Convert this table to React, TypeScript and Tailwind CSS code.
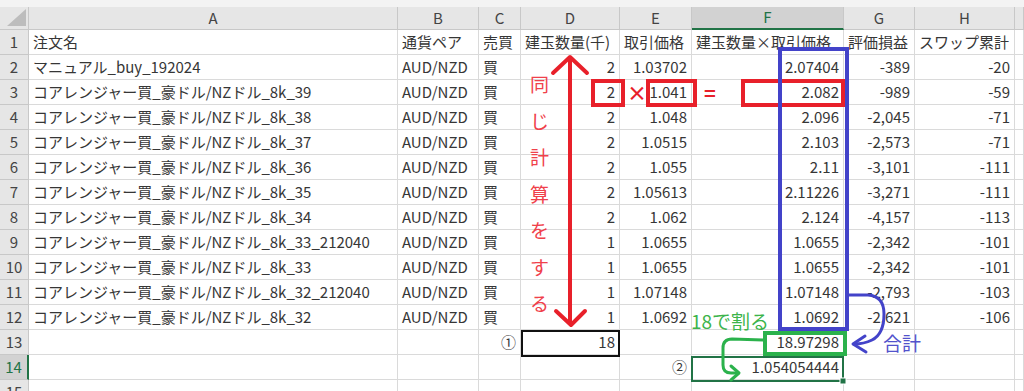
import React from "react";

const colW = [
  "w-[29px]",
  "w-[369px]",
  "w-[81px]",
  "w-[42px]",
  "w-[99px]",
  "w-[72px]",
  "w-[152px]",
  "w-[71px]",
  "w-[100px]",
  "w-[9px]",
];
const letters = ["", "A", "B", "C", "D", "E", "F", "G", "H", ""];

const name = "コアレンジャー買_豪ドル/NZドル_8k_";

// [A, B, C, D, E, F, G, H]
const rows: string[][] = [
  ["注文名", "通貨ペア", "売買", "建玉数量(千)", "取引価格", "建玉数量×取引価格", "評価損益", "スワップ累計"],
  ["マニュアル_buy_192024", "AUD/NZD", "買", "2", "1.03702", "2.07404", "-389", "-20"],
  [name + "39", "AUD/NZD", "買", "2", "1.041", "2.082", "-989", "-59"],
  [name + "38", "AUD/NZD", "買", "2", "1.048", "2.096", "-2,045", "-71"],
  [name + "37", "AUD/NZD", "買", "2", "1.0515", "2.103", "-2,573", "-71"],
  [name + "36", "AUD/NZD", "買", "2", "1.055", "2.11", "-3,101", "-111"],
  [name + "35", "AUD/NZD", "買", "2", "1.05613", "2.11226", "-3,271", "-111"],
  [name + "34", "AUD/NZD", "買", "2", "1.062", "2.124", "-4,157", "-113"],
  [name + "33_212040", "AUD/NZD", "買", "1", "1.0655", "1.0655", "-2,342", "-101"],
  [name + "33", "AUD/NZD", "買", "1", "1.0655", "1.0655", "-2,342", "-101"],
  [name + "32_212040", "AUD/NZD", "買", "1", "1.07148", "1.07148", "-2,793", "-103"],
  [name + "32", "AUD/NZD", "買", "1", "1.0692", "1.0692", "-2,621", "-106"],
  ["", "", "①", "18", "", "18.97298", "", ""],
  ["", "", "", "", "②", "1.054054444", "", ""],
  ["", "", "", "", "", "", "", ""],
];

// header row is text; numbers and ①② sit on the right
function isRight(r: number, c: number, v: string) {
  if (r === 0) return false;
  if (v === "①" || v === "②") return true;
  return c >= 3;
}

export default function App() {
  return (
    <div className="relative w-[1024px] h-[391px] overflow-hidden bg-white font-['Noto_Sans_CJK_JP','Noto_Sans',sans-serif] text-[15px] text-[#363636]">
      <div className="h-[7px] bg-[#f3f3f3]" />

      {/* column headers */}
      <div className="flex h-[23px] bg-[#e6e6e6]">
        {letters.map((l, i) => (
          <div
            key={i}
            className={
              colW[i] +
              " shrink-0 flex items-center justify-center border-r border-[#c8c8c8] " +
              (i === 6
                ? "bg-[#d2d2d2] text-[#217346] border-b-2 border-b-[#217346]"
                : "text-[#444] border-b border-b-[#c8c8c8]")
            }
          >
            {i === 0 ? (
              <div className="w-full h-full flex items-end justify-end pr-[2px] pb-[3px]">
                <div className="w-0 h-0 border-l-[19px] border-l-transparent border-b-[17px] border-b-[#bdbdbd]" />
              </div>
            ) : (
              l
            )}
          </div>
        ))}
      </div>

      {/* rows */}
      {rows.map((row, r) => (
        <div key={r} className="flex h-[25px]">
          <div
            className={
              "w-[29px] shrink-0 flex items-center justify-center border-b border-[#c8c8c8] " +
              (r === 13
                ? "bg-[#d2d2d2] text-[#217346] border-r-2 border-r-[#217346]"
                : "bg-[#e6e6e6] text-[#444] border-r border-r-[#c8c8c8]")
            }
          >
            {r + 1}
          </div>
          {[...row, "", ""].map((v, c) => (
            <div
              key={c}
              className={
                colW[c + 1] +
                " shrink-0 flex items-center border-r border-b border-[#dadada] px-[4px] whitespace-nowrap leading-[24px] " +
                (isRight(r, c, v) ? "justify-end" : "justify-start")
              }
            >
              {v}
            </div>
          ))}
        </div>
      ))}

      {/* annotations drawn over the sheet */}
      <svg
        className="absolute left-0 top-0 pointer-events-none"
        width="1024"
        height="391"
        viewBox="0 0 1024 391"
        fill="none"
      >
        {/* D13 black cell border */}
        <rect x="522" y="331" width="97" height="25" stroke="#111" strokeWidth="2" />

        {/* F14 selection */}
        <rect x="692" y="357" width="151" height="24" stroke="#217346" strokeWidth="2" />
        <rect x="840" y="378" width="6" height="6" fill="#217346" stroke="#fff" strokeWidth="1" />

        {/* red double arrow */}
        <g stroke="#e8202a" strokeWidth="4" strokeLinecap="round" strokeLinejoin="round">
          <line x1="570" y1="60" x2="570" y2="323" />
          <polyline points="553,73 570,57 587,73" />
          <polyline points="556,311 571,325 585,311" />
        </g>

        {/* red boxes */}
        <g stroke="#e8202a" strokeWidth="4">
          <rect x="593" y="81" width="30" height="24" />
          <rect x="648" y="81" width="47" height="24" />
          <rect x="743" y="81" width="100" height="24" />
        </g>

        {/* blue box and arrow */}
        <rect x="780" y="49" width="67" height="280" stroke="#4343c9" strokeWidth="4" />
        <g stroke="#4343c9" strokeWidth="3" strokeLinecap="round" strokeLinejoin="round">
          <path d="M849 295 L868 295 Q884 296 884 314 Q884 334 872 340 Q864 344 854 344" />
          <polyline points="865,336 853,344 866,352" />
        </g>

        {/* green box and arrow */}
        <rect x="765" y="333" width="80" height="21" stroke="#2bb24c" strokeWidth="4" />
        <g stroke="#2bb24c" strokeWidth="3" strokeLinecap="round" strokeLinejoin="round">
          <path d="M763 340 L732 339 Q723 339 723 348 L723 365 Q723 373 731 373 L738 373" />
          <polyline points="731,366 739,373 731,380" />
        </g>
      </svg>

      {/* red operators */}
      <div className="absolute left-[627px] top-[80px] flex gap-[57px] text-[20px] font-bold text-[#e8202a] leading-[26px]">
        <span>×</span>
        <span>=</span>
      </div>

      {/* vertical red text */}
      <div className="absolute left-[530px] top-[66px] flex flex-col text-[19px] leading-[36.5px] text-[#f0414b]">
        {"同じ計算をする".split("").map((ch) => (
          <span key={ch}>{ch}</span>
        ))}
      </div>

      <span className="absolute left-[691px] top-[308px] text-[19px] leading-[26px] text-[#3cb44b]">18で割る</span>
      <span className="absolute left-[883px] top-[330px] text-[19px] leading-[26px] text-[#5252cc]">合計</span>
    </div>
  );
}
